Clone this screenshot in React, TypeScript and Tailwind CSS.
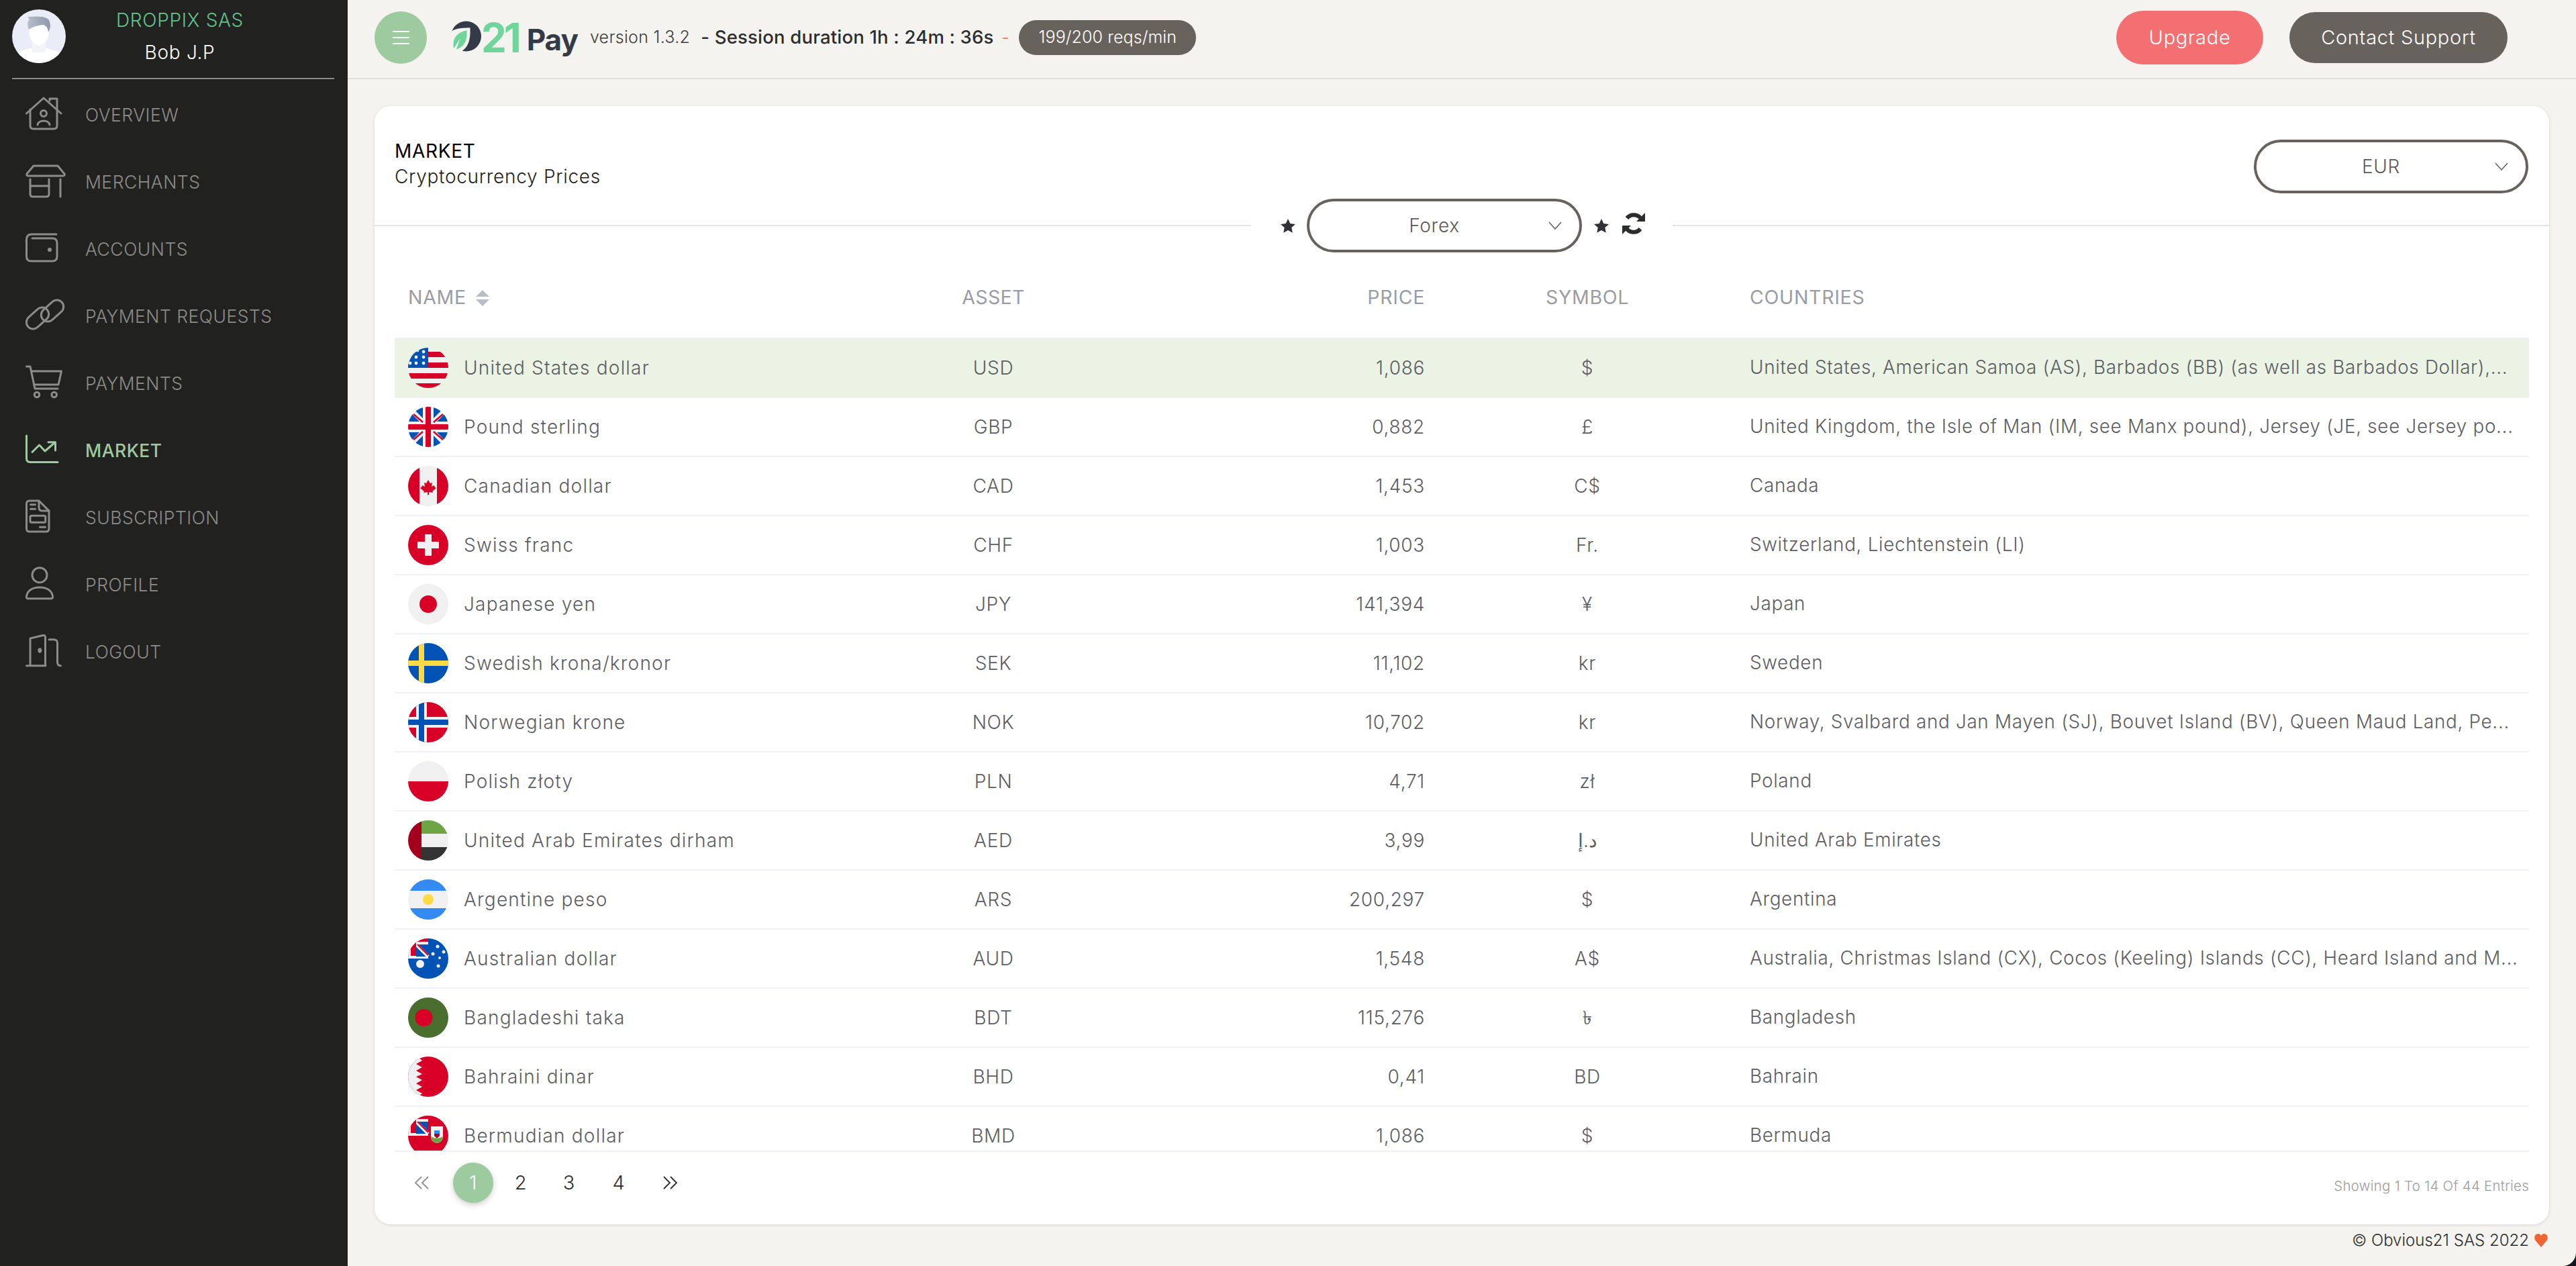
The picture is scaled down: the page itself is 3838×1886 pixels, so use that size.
import React from "react";

const S = { fill: "none", stroke: "currentColor", strokeWidth: 3, strokeLinecap: "round", strokeLinejoin: "round" } as const;

const icons: Record<string, React.ReactNode> = {
  overview: (
    <g {...S}>
      <path d="M1.5 27 27 4l26 23" />
      <path d="M36 8V5h11v16" />
      <path d="M7 21v24q0 5 5 5h30q5 0 5-5V21" />
      <circle cx="27" cy="27" r="4.5" />
      <path d="M18 44c1-8 17-8 18 0" />
    </g>
  ),
  merchants: (
    <g {...S}>
      <path d="M12 5h36l10 12q1 3-2 3H4q-3 0-2-3z" />
      <path d="M7 25v22q0 4 4 4h20q4 0 4-4V25" />
      <path d="M7 35h28M52 25v26" />
    </g>
  ),
  accounts: (
    <g {...S}>
      <path d="M46 7H9Q1.5 7 1.5 15v25q0 7 7 7H40q7 0 7-7V20q0-7-7-7H10" />
      <circle cx="36" cy="30" r="1.6" fill="currentColor" />
    </g>
  ),
  link: (
    <g {...S}>
      <rect x="-1" y="22" width="38" height="20" rx="10" transform="rotate(-42 18 32)" />
      <rect x="21" y="11" width="38" height="20" rx="10" transform="rotate(-42 40 21)" />
    </g>
  ),
  payments: (
    <g {...S}>
      <path d="M1.5 4H7l7 33h34" />
      <path d="M9 11h44.5L49 31H12.5" />
      <circle cx="17" cy="46" r="3.8" />
      <circle cx="42.7" cy="46" r="3.8" />
    </g>
  ),
  market: (
    <g {...S}>
      <path d="M1.5 7v34q0 5.5 5.5 5.5h41" />
      <path d="M10 31.5 20.5 21 29 30l15-13" />
      <path d="M34 16.7h10.5V29" />
    </g>
  ),
  subscription: (
    <g {...S}>
      <path d="M20 4H6Q1.5 4 1.5 8.5v37Q1.5 50 6 50h24.500Q35 50 35 45.500V19z" />
      <path d="M20 4v10q0 5 5 5h10" />
      <path d="M7.500 9.700H14.500M7.500 16.300H14.500M21.500 43.300H29.500" />
      <rect x="7" y="26.300" width="22.700" height="10" rx="2" />
    </g>
  ),
  profile: (
    <g {...S}>
      <circle cx="21" cy="14.700" r="11" />
      <path d="M4 49.700H38.500q2.500 0 2-3C39.500 38 32 33 21 33S2.500 38 1.500 46.700q-.5 3 2.500 3z" />
    </g>
  ),
  logout: (
    <g {...S}>
      <path d="M1.500 49.700h28.500M7 49.700V9l19-4.500q3.500-.5 3.500 3v42.200" />
      <path d="M35 10.700h7q5.500 0 5.500 5.500v28q0 5.500 5 5.500" />
      <ellipse cx="21.300" cy="27" rx="1.500" ry="2.200" fill="currentColor" />
    </g>
  ),
};

const nav = [
  ["OVERVIEW", "overview"],
  ["MERCHANTS", "merchants"],
  ["ACCOUNTS", "accounts"],
  ["PAYMENT REQUESTS", "link"],
  ["PAYMENTS", "payments"],
  ["MARKET", "market"],
  ["SUBSCRIPTION", "subscription"],
  ["PROFILE", "profile"],
  ["LOGOUT", "logout"],
];

const R = "#d80027";
const B = "#0052b4";
const W = "#f0f0f0";

const Canton = () => (
  <g>
    <rect x="0" y="0" width="30" height="30" fill={W} />
    <rect x="12" y="9" width="18" height="18" fill={B} />
    <path d="M12 9 30 27" stroke={W} strokeWidth="5" />
    <path d="M14 9 30 25" stroke={R} strokeWidth="2" />
    <rect x="4" y="0" width="26" height="5" fill={R} />
    <rect x="4" y="0" width="8" height="26" fill={R} />
  </g>
);

const GbQuarter = () => (
  <g>
    <path d="M22 0v17L8 3q6-3 14-3zM0 22h17L3 8Q0 14 0 22z" fill={B} />
    <path d="M8 11 22 23" stroke={R} strokeWidth="2.500" />
  </g>
);

const flags: Record<string, React.ReactNode> = {
  USD: (
    <>
      <rect width="60" height="60" fill={W} />
      {[6, 22, 38, 53].map((y) => (
        <rect key={y} y={y} width="60" height="8" fill={R} />
      ))}
      <rect width="30" height="30" fill={B} />
      {[[23, 6], [12, 14], [23, 14], [3, 23], [12, 23], [23, 23], [14, 4]].map(([x, y]) => (
        <circle key={`${x}-${y}`} cx={x} cy={y} r="2.400" fill={W} />
      ))}
    </>
  ),
  GBP: (
    <>
      <rect width="60" height="60" fill={W} />
      <GbQuarter />
      <g transform="translate(60 0) scale(-1 1)"><GbQuarter /></g>
      <g transform="translate(0 60) scale(1 -1)"><GbQuarter /></g>
      <g transform="translate(60 60) scale(-1 -1)"><GbQuarter /></g>
      <rect x="26" width="8" height="60" fill={R} />
      <rect y="26" width="60" height="8" fill={R} />
    </>
  ),
  CAD: (
    <>
      <rect width="60" height="60" fill={W} />
      <rect width="17" height="60" fill={R} />
      <rect x="43" width="17" height="60" fill={R} />
      <path d="M30 21l3 5 3-1-1 6 4-2 1 3 2 1-6 5 1 2-6-1v4h-2v-4l-6 1 1-2-6-5 2-1 1-3 4 2-1-6 3 1z" fill={R} />
    </>
  ),
  CHF: (
    <>
      <rect width="60" height="60" fill={R} />
      <path d="M25 14h10v11h11v10H35v11H25V35H14V25h11z" fill={W} />
    </>
  ),
  JPY: (
    <>
      <rect width="60" height="60" fill={W} />
      <circle cx="30" cy="30" r="13" fill={R} />
    </>
  ),
  SEK: (
    <>
      <rect width="60" height="60" fill={B} />
      <rect x="16" width="8" height="60" fill="#ffda44" />
      <rect y="26" width="60" height="8" fill="#ffda44" />
    </>
  ),
  NOK: (
    <>
      <rect width="60" height="60" fill={R} />
      <rect x="12" width="16" height="60" fill={W} />
      <rect y="22" width="60" height="16" fill={W} />
      <rect x="16" width="8" height="60" fill={B} />
      <rect y="26" width="60" height="8" fill={B} />
    </>
  ),
  PLN: (
    <>
      <rect width="60" height="30" fill={W} />
      <rect y="30" width="60" height="30" fill={R} />
    </>
  ),
  AED: (
    <>
      <rect width="60" height="60" fill={W} />
      <rect x="19" width="41" height="20" fill="#6da544" />
      <rect x="19" y="40" width="41" height="20" fill="#333" />
      <rect width="20" height="60" fill="#a2001d" />
    </>
  ),
  ARS: (
    <>
      <rect width="60" height="60" fill={W} />
      <rect width="60" height="17" fill="#338af3" />
      <rect y="43" width="60" height="17" fill="#338af3" />
      <circle cx="30" cy="30" r="8" fill="#ffda44" />
    </>
  ),
  AUD: (
    <>
      <rect width="60" height="60" fill={B} />
      <Canton />
      {[[18, 38, 6], [44, 12, 2.500], [37, 23, 2.500], [53, 20, 2.500], [47, 29, 2], [45, 41, 2.500]].map(([x, y, r]) => (
        <circle key={x} cx={x} cy={y} r={r} fill={W} />
      ))}
    </>
  ),
  BDT: (
    <>
      <rect width="60" height="60" fill="#496e2d" />
      <circle cx="23.500" cy="30" r="13" fill={R} />
    </>
  ),
  BHD: (
    <>
      <rect width="60" height="60" fill={R} />
      <path d="M0 0h14l7 6-9 5 9 5-9 5 9 5-9 4 9 5-9 5 9 5-9 5 9 5-7 5H0z" fill={W} />
    </>
  ),
  BMD: (
    <>
      <rect width="60" height="60" fill={R} />
      <Canton />
      <path d="M34 16h18v16q-1 8-9 9-8-1-9-9z" fill={W} />
      <rect x="39" y="22" width="8" height="5" fill="#338af3" />
      <path d="M39 27h8v3l-4 4-4-4z" fill="#a2001d" />
      <path d="M34 31q5 3 9 3t9-3q-1 9-9 10-8-1-9-10z" fill="#6da544" />
    </>
  ),
};

const rows = [
  ["United States dollar", "USD", "1,086", "$", "United States, American Samoa (AS), Barbados (BB) (as well as Barbados Dollar),..."],
  ["Pound sterling", "GBP", "0,882", "£", "United Kingdom, the Isle of Man (IM, see Manx pound), Jersey (JE, see Jersey po..."],
  ["Canadian dollar", "CAD", "1,453", "C$", "Canada"],
  ["Swiss franc", "CHF", "1,003", "Fr.", "Switzerland, Liechtenstein (LI)"],
  ["Japanese yen", "JPY", "141,394", "¥", "Japan"],
  ["Swedish krona/kronor", "SEK", "11,102", "kr", "Sweden"],
  ["Norwegian krone", "NOK", "10,702", "kr", "Norway, Svalbard and Jan Mayen (SJ), Bouvet Island (BV), Queen Maud Land, Pe..."],
  ["Polish złoty", "PLN", "4,71", "zł", "Poland"],
  ["United Arab Emirates dirham", "AED", "3,99", "د.إ", "United Arab Emirates"],
  ["Argentine peso", "ARS", "200,297", "$", "Argentina"],
  ["Australian dollar", "AUD", "1,548", "A$", "Australia, Christmas Island (CX), Cocos (Keeling) Islands (CC), Heard Island and M..."],
  ["Bangladeshi taka", "BDT", "115,276", "৳", "Bangladesh"],
  ["Bahraini dinar", "BHD", "0,41", "BD", "Bahrain"],
  ["Bermudian dollar", "BMD", "1,086", "$", "Bermuda"],
];

const Chevron = () => (
  <svg width="20" height="12" viewBox="0 0 20 12" className="absolute right-[26px] top-1/2 -translate-y-1/2 text-[#68625c]">
    <path d="M1 1l9 10 9-10" fill="none" stroke="currentColor" strokeWidth="1.600" />
  </svg>
);

const Select = ({ label, w, pr }: { label: string; w: string; pr: string }) => (
  <div className={`relative flex h-[80px] items-center justify-center rounded-[40px] border-[4px] border-[#68625c] bg-white text-[28px] font-light text-[#5f5a55] ${w} ${pr}`}>
    {label}
    <Chevron />
  </div>
);

const Star = () => (
  <svg width="22" height="21" viewBox="0 0 22 21" className="text-[#2f3136]">
    <path d="M11 0l3.300 7 7.700.9-5.700 5.200 1.500 7.600L11 17l-6.800 3.700 1.500-7.600L0 7.900 7.700 7z" fill="currentColor" />
  </svg>
);

export default function App() {
  return (
    <div className="flex h-[1886px] w-[3838px] overflow-hidden bg-[#15161c] font-['Inter','Liberation_Sans',sans-serif] tracking-[0.7px]">
      <aside className="flex w-[518px] shrink-0 flex-col bg-[#212120] pl-[18px] pr-[20px]">
        <div className="flex h-[118px] items-start border-b-2 border-[#8b8a88] pt-[14px]">
          <svg width="80" height="80" viewBox="0 0 80 80" className="shrink-0 rounded-full">
            <defs>
              <linearGradient id="hair" x1="0" x2="1">
                <stop offset="0" stopColor="#b6bdcb" />
                <stop offset="1" stopColor="#8f98a8" />
              </linearGradient>
            </defs>
            <rect width="80" height="80" fill="#eaedf8" />
            <path d="M0 80V68q18-8 26-10h26q12 3 28 10v12z" fill="#fff" />
            <rect x="30" y="46" width="20" height="18" fill="#f3f4f8" />
            <path d="M25 30q0-14 15-14t15 14q0 14-6 19-4 4-9 5-5-1-9-5-6-5-6-19z" fill="#fff" />
            <path d="M25 30q-3-7-1-13l2-2-3-4q14-1 22 0 11 1 12 12 0 6-3 11-1-9-7-11-14 1-22 7z" fill="url(#hair)" />
          </svg>
          <div className="-mt-[8px] flex flex-1 flex-col items-center pr-[60px] text-[28px] font-light leading-[48px]">
            <span className="text-[#63c68d]">DROPPIX SAS</span>
            <span className="text-white">Bob J.P</span>
          </div>
        </div>
        <nav className="flex flex-col pl-[20px] pt-[4px]">
          {nav.map(([label, key]) => {
            const active = label === "MARKET";
            return (
              <div key={label} className={`flex h-[100px] items-center gap-[29px] text-[26.500px] tracking-[0.5px] ${active ? "font-medium text-[#9dca9f]" : "font-light text-[#8c8c8a]"}`}>
                <svg width="60" height="60" viewBox="0 0 60 60" className="shrink-0">
                  {icons[key]}
                </svg>
                <span>{label}</span>
              </div>
            );
          })}
        </nav>
      </aside>

      <main className="flex min-w-0 flex-1 flex-col rounded-br-[20px] bg-[#f4f3ef]">
        <header className="flex h-[118px] shrink-0 items-center border-b-2 border-[#e0dfdd] pl-[40px] pr-[102px] pb-[4px]">
          <div className="flex h-[78px] w-[78px] items-center justify-center rounded-full bg-[#9dca9f]">
            <div className="flex w-[25px] flex-col gap-[7px]">
              <span className="h-[2px] bg-white" />
              <span className="h-[2px] bg-white" />
              <span className="h-[2px] bg-white" />
            </div>
          </div>
          <div className="ml-[36px] flex items-center">
            <svg width="45" height="48" viewBox="0 0 46 48" className="mb-[5px]">
              <circle cx="23" cy="24" r="23" fill="#343a46" />
              <path d="M0 48V18Q4 11 29 11q2 29-15 37z" fill="#f4f3ef" />
              <path d="M4 43Q0 20 24 15q2 23-16 29l6-17z" fill="#70d59a" />
            </svg>
            <span className="text-[60px] font-bold leading-none tracking-[-4px] text-[#70d59a]">21</span>
            <span className="ml-[12px] pt-[5px] text-[44px] font-bold leading-none tracking-[-1px] text-[#343a46]">Pay</span>
          </div>
          <span className="ml-[18px] text-[25px] font-light tracking-[0.3px] text-[#3b3b3d]">version 1.3.2</span>
          <span className="ml-[16px] text-[27.500px] font-medium tracking-[0.2px] text-[#2d2d2f]">- Session duration 1h : 24m : 36s</span>
          <span className="ml-[12px] text-[24px] text-[#f0845f]">-</span>
          <span className="ml-[14px] flex h-[52px] w-[264px] items-center justify-center rounded-[26px] bg-[#68625c] text-[25px] font-light tracking-[0.1px] text-white">199/200 reqs/min</span>
          <div className="flex-1" />
          <button className="flex h-[80px] w-[219px] items-center justify-center rounded-[40px] bg-[#f46f72] text-[29px] font-light text-white">Upgrade</button>
          <button className="ml-[39px] flex h-[76px] w-[325px] items-center justify-center rounded-[38px] bg-[#68625c] text-[29px] font-light text-white">Contact Support</button>
        </header>

        <div className="flex min-h-0 flex-1 flex-col pl-[40px] pr-[40px] pt-[40px]">
          <section className="flex h-[1666px] flex-col rounded-[24px] bg-white shadow-[0_1px_4px_rgba(0,0,0,0.12)]">
            <div className="flex h-[138px] shrink-0 items-start justify-between pl-[30px] pr-[31px]">
              <div className="flex flex-col pt-[48px] text-[28px] leading-[38px] text-[#1f1f21]">
                <span className="font-normal text-black">MARKET</span>
                <span className="font-light">Cryptocurrency Prices</span>
              </div>
              <div className="pt-[50px]">
                <Select label="EUR" w="w-[409px]" pr="pr-[30px]" />
              </div>
            </div>

            <div className="flex h-[80px] shrink-0 items-center">
              <div className="h-[2px] flex-1 bg-[#dfe2e8]" />
              <div className="ml-[44px] mr-[17px]"><Star /></div>
              <Select label="Forex" w="w-[410px]" pr="pr-[30px]" />
              <div className="ml-[18px] mr-[20px]"><Star /></div>
              <svg width="34" height="32" viewBox="0 0 34 32" className="mb-[6px] text-[#2b2c30]">
                <path d="M29 11A13 13 0 0 0 7 8" fill="none" stroke="currentColor" strokeWidth="6" />
                <path d="M34 0v13H21z" fill="currentColor" />
                <path d="M5 21a13 13 0 0 0 22 3" fill="none" stroke="currentColor" strokeWidth="6" />
                <path d="M0 32V19h13z" fill="currentColor" />
              </svg>
              <div className="ml-[41px] h-[2px] flex-1 bg-[#dfe2e8]" />
            </div>

            <div className="mx-[30px] h-[1340px] shrink-0 overflow-hidden border-b-2 border-[#edf0f5]">
              <table className="w-[3180px] table-fixed text-[28px] font-light text-[#5c5d62]">
                <colgroup>
                  <col className="w-[792px]" />
                  <col className="w-[200px]" />
                  <col className="w-[543px]" />
                  <col className="w-[484px]" />
                  <col className="w-[1161px]" />
                </colgroup>
                <thead>
                  <tr className="h-[128px] border-b-2 border-[#edf0f5] text-[28.500px] text-[#9a9ca5]">
                    <th className="pl-[20px] pt-[8px] text-left font-normal">
                      <span className="inline-flex items-center gap-[14px]">
                        NAME
                        <svg width="20" height="24" viewBox="0 0 20 24" className="text-[#b9bdc7]">
                          <path d="M10 0l10 10H0zM10 24 0 14h20z" fill="currentColor" />
                        </svg>
                      </span>
                    </th>
                    <th className="pt-[8px] text-center font-normal tracking-[0.3px]">ASSET</th>
                    <th className="pt-[8px] text-right font-normal">PRICE</th>
                    <th className="pt-[8px] text-center font-normal">SYMBOL</th>
                    <th className="pt-[8px] text-left font-normal">COUNTRIES</th>
                  </tr>
                </thead>
                <tbody>
                  {rows.map(([name, code, price, sym, countries], i) => (
                    <tr key={code} className={`h-[88px] border-b-2 border-[#edf0f5] ${i === 0 ? "bg-[#ebf3e4]" : ""}`}>
                      <td className="pl-[20px]">
                        <div className="flex items-center gap-[23px]">
                          <div className="h-[60px] w-[60px] shrink-0 overflow-hidden rounded-full">
                            <svg width="60" height="60" viewBox="0 0 60 60">{flags[code]}</svg>
                          </div>
                          <span className="whitespace-nowrap tracking-[1.2px]">{name}</span>
                        </div>
                      </td>
                      <td className="text-center">{code}</td>
                      <td className="text-right">{price}</td>
                      <td className="text-center font-['Inter','DejaVu_Sans',sans-serif]">{sym}</td>
                      <td className="truncate text-[27.800px]">{countries}</td>
                    </tr>
                  ))}
                </tbody>
              </table>
            </div>

            <div className="flex flex-1 items-start justify-between pl-[30px] pr-[30px] pt-[16px]">
              <div className="flex h-[60px] items-center text-[29px] font-light text-[#2b2b2d]">
                <span className="flex w-[87px] justify-center pl-[10px] pr-[17px] text-[#8f8f8f]">
                  <svg width="22" height="20" viewBox="0 0 22 20">
                    <path d="M11 1 2 10l9 9M21 1l-9 9 9 9" fill="none" stroke="currentColor" strokeWidth="1.800" />
                  </svg>
                </span>
                <span className="flex h-[60px] w-[60px] items-center justify-center rounded-full bg-[#9dca9f] text-white shadow-[0_3px_8px_rgba(0,0,0,0.2)]">1</span>
                <span className="ml-[11px] w-[60px] text-center">2</span>
                <span className="ml-[12px] w-[60px] text-center">3</span>
                <span className="ml-[14px] w-[60px] text-center">4</span>
                <span className="ml-[17px] flex w-[60px] justify-center">
                  <svg width="22" height="20" viewBox="0 0 22 20">
                    <path d="m1 1 9 9-9 9M11 1l9 9-9 9" fill="none" stroke="currentColor" strokeWidth="1.800" />
                  </svg>
                </span>
              </div>
              <span className="pt-[20px] text-[20.400px] font-light tracking-[0.3px] text-[#9b9b9b]">Showing 1 To 14 Of 44 Entries</span>
            </div>
          </section>

          <footer className="flex items-center justify-end gap-[8px] pr-[2px] pt-[9px] text-[24px] font-light leading-[30px] tracking-[0px] text-[#2c2c2c]">
            <span>© Obvious21 SAS 2022</span>
            <svg width="20" height="20" viewBox="0 0 20 20">
              <path d="M10 20 1.500 10C-1.500 6 1 0 5.500 0 8 0 9.500 1.500 10 3c.5-1.500 2-3 4.500-3C19 0 21.500 6 18.500 10z" fill="#ee6435" />
            </svg>
          </footer>
        </div>
      </main>
    </div>
  );
}
